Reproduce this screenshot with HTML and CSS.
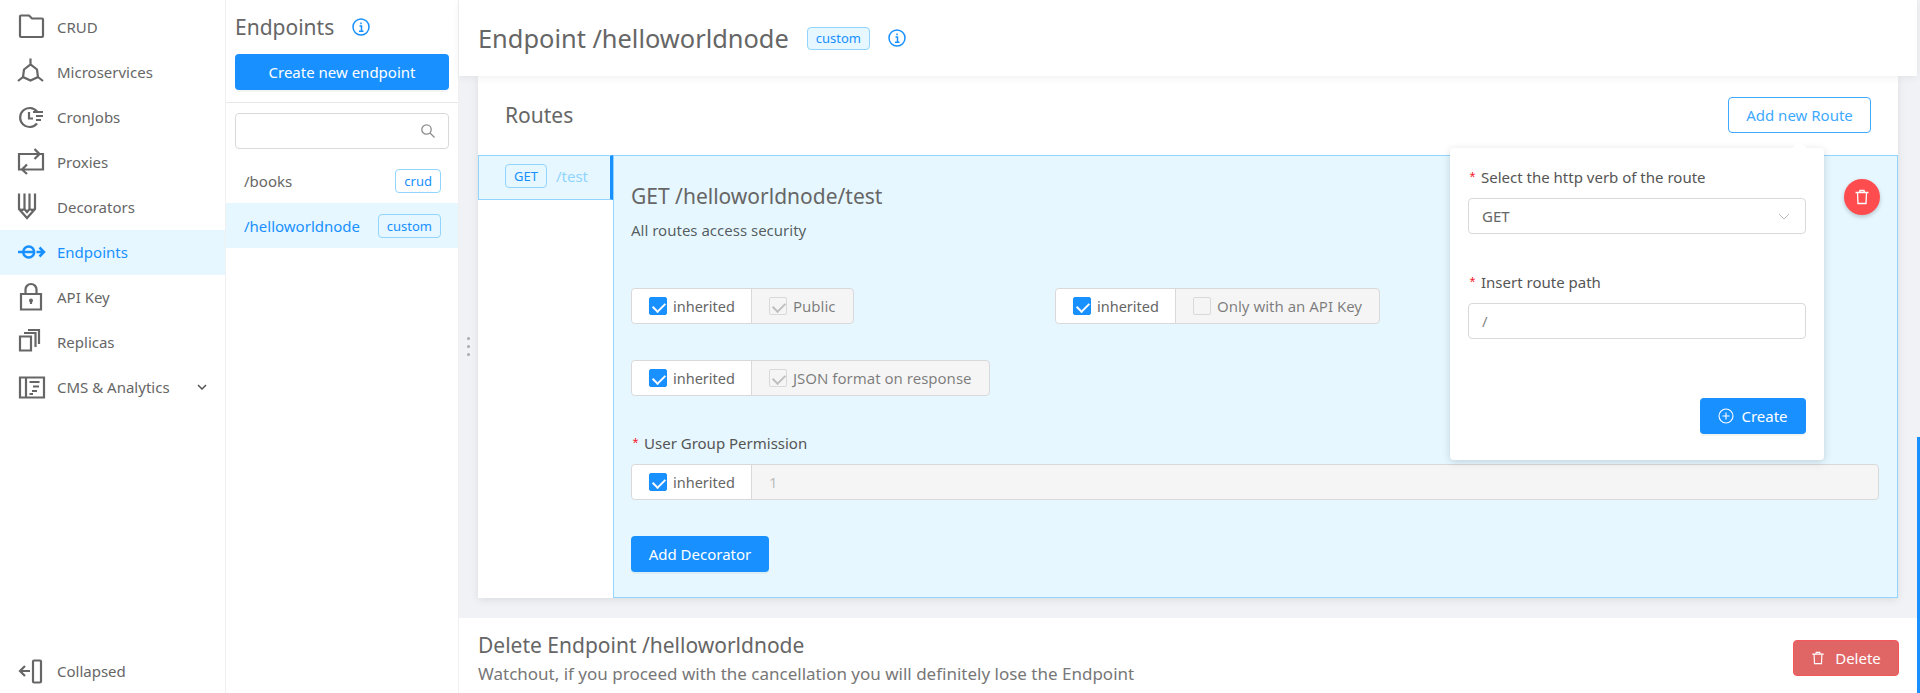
FILE: index.html
```html
<html>
<head>
<meta charset="UTF-8">
<title>Endpoint /helloworldnode</title>
<link rel="stylesheet" href="styles.css">
</head>
<body>
<div class="app">
    <!-- main menu -->
    <nav class="menu">
        <ul class="menu_list">
            <li class="menu_item">
                <svg class="menu_icon" viewBox="0 0 26 26"><path d="M2 1.500a1 1 0 0 1 1-1h8l3 3h10a1 1 0 0 1 1 1v16.500a1 1 0 0 1-1 1H3a1 1 0 0 1-1-1z"/></svg>
                <span>CRUD</span>
            </li>
            <li class="menu_item">
                <svg class="menu_icon" viewBox="0 0 26 26"><path d="M12.500-1.500v6M6 9.500l6.500-5 6.500 5 1 7.500-7.500 3.500L5 17zM5 17l-5 4M20 17l5 4"/></svg>
                <span>Microservices</span>
            </li>
            <li class="menu_item">
                <svg class="menu_icon" viewBox="0 0 26 26"><path d="M19 6.500A9.500 9.500 0 1 0 19 18.500M11 7v6.500h4M15 7h10M18 11h7M18 15h5"/></svg>
                <span>CronJobs</span>
            </li>
            <li class="menu_item">
                <svg class="menu_icon" viewBox="0 0 26 26"><path d="M7 19.500H1V4H21M16.500-1 21.500 4l-5 5M19 4h6v15.500H5M9 14.500l-5 5 5 4.500"/></svg>
                <span>Proxies</span>
            </li>
            <li class="menu_item">
                <svg class="menu_icon" viewBox="0 0 26 26"><path d="M1-1.500v15.500l8 9 8-9V-1.500M6.500-1.500V14l2.500 3 2.500-3V-1.500M1 14l3 1 2.500-1M17 14l-3 1-2.500-1"/></svg>
                <span>Decorators</span>
            </li>
            <li class="menu_item active">
                <svg class="menu_icon" viewBox="0 0 26 26"><circle class="thick" cx="10.700" cy="12" r="5.500"/><path class="thick" d="M0 12h15.500M18.500 12h6.500M21.500 7.500 26 12l-4.500 4.500"/></svg>
                <span>Endpoints</span>
            </li>
            <li class="menu_item">
                <svg class="menu_icon" viewBox="0 0 26 26"><path d="M3 9h20v15.500H3zM7.500 9V4.500a5.500 5.500 0 0 1 11 0V9M13 16v3"/><circle class="solid" cx="13" cy="15.500" r="2"/></svg>
                <span>API Key</span>
            </li>
            <li class="menu_item">
                <svg class="menu_icon" viewBox="0 0 26 26"><path d="M2 6.500h11v14H2zM6 3h11.500v14M10 0h11v14"/></svg>
                <span>Replicas</span>
            </li>
            <li class="menu_item">
                <svg class="menu_icon" viewBox="0 0 26 26"><path d="M2 2.500h24v20H2zM8 2.500v20M11.500 7h10M15 11.500h6M14 16h5M11.500 19h3.500"/></svg>
                <span>CMS &amp; Analytics</span>
                <svg class="menu_arrow" viewBox="0 0 10 6"><path d="M1 1l4 4 4-4"/></svg>
            </li>
        </ul>
        <div class="menu_item collapse_item">
            <svg class="menu_icon" viewBox="0 0 26 26"><path d="M2 12h10M7 7l-5 5 5 5M16 1.500h6a1 1 0 0 1 1 1v20a1 1 0 0 1-1 1h-6a1 1 0 0 1-1-1v-20a1 1 0 0 1 1-1z"/></svg>
            <span>Collapsed</span>
        </div>
    </nav>

    <!-- endpoints list -->
    <aside class="side">
        <div class="side_top">
            <h2 class="side_title">Endpoints
                <svg class="info_icon" viewBox="0 0 18 18"><circle cx="9" cy="9" r="8"/><path d="M7.500 8h2v5M7 13.200h4.500M9 4.500v1.800"/></svg>
            </h2>
            <button class="btn primary wide">Create new endpoint</button>
        </div>
        <div class="search_wrap">
            <div class="search">
                <svg class="search_icon" viewBox="0 0 14 14"><circle cx="5.500" cy="5.500" r="4.700"/><path d="M9 9l4.500 4.500"/></svg>
            </div>
        </div>
        <ul class="ep_list">
            <li class="ep_row"><span>/books</span><span class="tag">crud</span></li>
            <li class="ep_row selected"><span>/helloworldnode</span><span class="tag">custom</span></li>
        </ul>
    </aside>

    <main class="main">
        <div class="dots"><i></i><i></i><i></i></div>
        <header class="head">
            <h1 class="head_title">Endpoint /helloworldnode</h1>
            <span class="tag head_tag">custom</span>
            <svg class="info_icon" viewBox="0 0 18 18"><circle cx="9" cy="9" r="8"/><path d="M7.500 8h2v5M7 13.200h4.500M9 4.500v1.800"/></svg>
        </header>

        <section class="card">
            <div class="card_head">
                <h3 class="card_title">Routes</h3>
                <button class="btn outline">Add new Route</button>
            </div>
            <div class="routes">
                <div class="route_tabs">
                    <div class="route_tab"><span class="tag verb">GET</span><span class="route_path">/test</span></div>
                </div>
                <div class="route_body">
                    <h4 class="route_title">GET /helloworldnode/test</h4>
                    <p class="route_sub">All routes access security</p>

                    <div class="opts first">
                        <div class="group">
                            <div class="group_left"><span class="check on"></span>inherited</div>
                            <div class="group_right"><span class="check off_on"></span>Public</div>
                        </div>
                        <div class="group">
                            <div class="group_left"><span class="check on"></span>inherited</div>
                            <div class="group_right"><span class="check"></span>Only with an API Key</div>
                        </div>
                        <div class="group">
                            <div class="group_left"><span class="check on"></span>inherited</div>
                            <div class="group_right"><span class="check"></span>Only with a valid token</div>
                        </div>
                    </div>
                    <div class="opts">
                        <div class="group">
                            <div class="group_left"><span class="check on"></span>inherited</div>
                            <div class="group_right"><span class="check off_on"></span>JSON format on response</div>
                        </div>
                    </div>

                    <label class="label perm_label"><span class="req">*</span>User Group Permission</label>
                    <div class="group full">
                        <div class="group_left"><span class="check on"></span>inherited</div>
                        <div class="group_right num">1</div>
                    </div>

                    <button class="btn primary decorator">Add Decorator</button>

                    <button class="trash_btn">
                        <svg class="trash_icon" viewBox="0 0 16 16"><path d="M1.500 3.500h13M3.500 3.500 4 14.500h8l.500-11M5.500 3.500l.5-2h4l.5 2"/></svg>
                    </button>
                </div>
            </div>

            <div class="pop">
                <span class="pop_arrow"></span>
                <label class="label"><span class="req">*</span>Select the http verb of the route</label>
                <div class="field">GET
                    <svg class="select_arrow" viewBox="0 0 12 7"><path d="M1 1l5 5 5-5"/></svg>
                </div>
                <label class="label second"><span class="req">*</span>Insert route path</label>
                <div class="field path">/</div>
                <div class="pop_foot">
                    <button class="btn primary create">
                        <svg class="plus_icon" viewBox="0 0 16 16"><circle cx="8" cy="8" r="7"/><path d="M8 4.500v7M4.500 8h7"/></svg>
                        Create
                    </button>
                </div>
            </div>
        </section>

        <section class="danger">
            <div>
                <div class="danger_title">Delete Endpoint /helloworldnode</div>
                <div class="danger_sub">Watchout, if you proceed with the cancellation you will definitely lose the Endpoint</div>
            </div>
            <button class="btn delete">
                <svg class="trash_icon small" viewBox="0 0 16 16"><path d="M1.500 3.500h13M3.500 3.500 4 14.500h8l.500-11M5.500 3.500l.5-2h4l.5 2"/></svg>
                Delete
            </button>
        </section>
    </main>
    <div class="scroll"><div class="scroll_thumb"></div></div>
</div>
</body>
</html>
```
FILE: styles.css
```css
* {
    box-sizing: border-box;
}

html, body {
    margin: 0;
    height: 100%;
    overflow: hidden;
}

body {
    font-family: "Noto Sans", "Open Sans", sans-serif;
    font-size: 15px;
    color: rgba(0, 0, 0, 0.65);
    background: #f0f2f5;
}

h1, h2, h3, h4, p, ul {
    margin: 0;
    padding: 0;
    font-weight: 400;
    list-style: none;
}

.app {
    display: flex;
    height: 693px;
}

/* main menu */
.menu {
    width: 226px;
    flex: none;
    display: flex;
    flex-direction: column;
    justify-content: space-between;
    background: #fff;
    border-right: 1px solid #f0f0f0;
    padding: 5px 0 0;
}

.menu_item {
    height: 45px;
    display: flex;
    align-items: center;
    padding: 0 18px;
    gap: 6px;
    color: #666;
}

.menu_item span {
    padding-bottom: 2px;
}

.menu_item.active {
    background: #e6f7ff;
    color: #1890ff;
}

.menu_icon {
    width: 26px;
    height: 26px;
    flex: none;
    fill: none;
    stroke: #666;
    stroke-width: 2.200;
    margin-right: 7px;
    overflow: visible;
}

.active .menu_icon {
    stroke: #1890ff;
}

.menu_icon .thick {
    stroke-width: 2.500;
}

.menu_icon .solid {
    fill: #666;
    stroke: none;
}

.menu_arrow {
    width: 10px;
    height: 6px;
    margin-left: auto;
    fill: none;
    stroke: #555;
    stroke-width: 1.500;
    position: relative;
    top: -1px;
}

.collapse_item {
    margin-bottom: -1px;
}

/* endpoints column */
.side {
    width: 233px;
    flex: none;
    background: #fff;
    border-right: 1px solid #f0f0f0;
}

.side_top {
    height: 103px;
    padding: 12px 9px 0;
    border-bottom: 1px solid #e8e8e8;
}

.side_title {
    font-size: 21px;
    line-height: 30px;
    color: #666;
    display: flex;
    align-items: center;
    gap: 18px;
    margin-bottom: 12px;
}

.info_icon {
    width: 18px;
    height: 18px;
    fill: none;
    stroke: #1890ff;
    stroke-width: 1.500;
}

.search_wrap {
    padding: 10px 9px 9px;
}

.search {
    height: 36px;
    border: 1px solid #d9d9d9;
    border-radius: 4px;
    display: flex;
    align-items: center;
    justify-content: flex-end;
    padding-right: 13px;
}

.search_icon {
    width: 14px;
    height: 14px;
    fill: none;
    stroke: #8c8c8c;
    stroke-width: 1.300;
}

.ep_row {
    height: 45px;
    display: flex;
    align-items: center;
    justify-content: space-between;
    padding: 0 17px 0 18px;
    color: #666;
}

.ep_row.selected {
    background: #e6f7ff;
    color: #1890ff;
}

.tag {
    display: inline-flex;
    align-items: center;
    height: 24px;
    padding: 0 8px;
    font-size: 13px;
    color: #1890ff;
    background: #fff;
    border: 1px solid #91d5ff;
    border-radius: 4px;
}

.selected .tag, .head_tag, .verb {
    background: #e6f7ff;
}

/* main area */
.main {
    flex: 1;
    min-width: 0;
    position: relative;
    display: flex;
    flex-direction: column;
}

.dots {
    position: absolute;
    left: 8px;
    top: 337px;
    display: flex;
    flex-direction: column;
    gap: 5px;
}

.dots i {
    width: 3px;
    height: 3px;
    border-radius: 50%;
    background: #aaa;
}

.head {
    height: 76px;
    flex: none;
    background: #fff;
    box-shadow: 0 2px 8px rgba(0, 0, 0, 0.06);
    display: flex;
    align-items: center;
    padding-left: 19px;
    position: relative;
    z-index: 2;
}

.head_title {
    font-size: 25.400px;
    color: #666;
    margin-right: 18px;
}

.head_tag {
    margin-right: 18px;
    height: 23px;
}

.card {
    margin: 0 19px 20px;
    background: #fff;
    height: 522px;
    flex: none;
    position: relative;
    box-shadow: 0 2px 8px rgba(0, 0, 0, 0.09);
    display: flex;
    flex-direction: column;
}

.card_head {
    height: 79px;
    flex: none;
    display: flex;
    align-items: center;
    justify-content: space-between;
    padding: 0 27px 1px 27px;
}

.card_title {
    font-size: 21px;
    color: #666;
}

.btn {
    font: inherit;
    height: 36px;
    border-radius: 4px;
    border: 1px solid transparent;
    padding: 0 17px;
    display: inline-flex;
    align-items: center;
    justify-content: center;
}

.primary {
    background: #1890ff;
    color: #fff;
    box-shadow: 0 2px 0 rgba(0, 0, 0, 0.045);
}

.wide {
    width: 100%;
}

.outline {
    width: 143px;
    padding: 0;
    background: #fff;
    color: #40a9ff;
    border-color: #40a9ff;
}

.routes {
    flex: 1;
    display: flex;
    min-height: 0;
}

.route_tabs {
    width: 135px;
    flex: none;
}

.route_tab {
    height: 45px;
    background: #e6f7ff;
    border: 1px solid #91d5ff;
    border-right: 3px solid #1890ff;
    padding-left: 26px;
    display: flex;
    align-items: center;
    gap: 9px;
}

.verb {
    margin-top: -3px;
}

.route_path {
    color: #91d5ff;
    margin-top: -4px;
}

.route_body {
    flex: 1;
    min-width: 0;
    background: #e6f7ff;
    border: 1px solid #91d5ff;
    padding: 25px 0 0 17px;
    position: relative;
}

.route_title {
    font-size: 21px;
    line-height: 30px;
    color: #666;
}

.route_sub {
    margin-top: 8px;
    line-height: 22px;
}

.opts {
    display: grid;
    grid-template-columns: 424px 424px 346px;
    justify-items: start;
    margin-bottom: 36px;
}

.opts.first {
    margin-top: 47px;
}

.group {
    height: 36px;
    display: inline-flex;
    border: 1px solid #d9d9d9;
    border-radius: 4px;
    background: #f5f5f5;
    color: rgba(0, 0, 0, 0.5);
}

.group_left {
    width: 120px;
    flex: none;
    background: #fff;
    border-right: 1px solid #d9d9d9;
    border-radius: 4px 0 0 4px;
    display: flex;
    align-items: center;
    padding-left: 17px;
    gap: 6px;
    font-size: 14.500px;
    color: #666;
}

.group_right {
    display: flex;
    align-items: center;
    padding: 0 17px;
    gap: 6px;
    white-space: nowrap;
}

.check {
    width: 18px;
    height: 18px;
    border: 1px solid #d9d9d9;
    border-radius: 2px;
    position: relative;
    flex: none;
}

.check.on {
    background: #1890ff;
    border-color: #1890ff;
}

.check.on::after, .check.off_on::after {
    content: "";
    position: absolute;
    left: 5px;
    top: 2px;
    width: 6px;
    height: 10px;
    border: solid #fff;
    border-width: 0 2px 2px 0;
    transform: rotate(45deg);
}

.check.off_on::after {
    border-color: #bfbfbf;
}

.label {
    display: block;
    line-height: 22px;
    color: #555;
}

.req {
    color: #f5222d;
    margin-right: 4px;
    font-family: "Liberation Mono", monospace;
}

.perm_label {
    margin-top: 1px;
    margin-bottom: 7px;
}

.group.full {
    display: flex;
    width: 1248px;
}

.num {
    color: #bfbfbf;
}

.decorator {
    margin-top: 36px;
    width: 138px;
    padding: 0;
}

.trash_btn {
    position: absolute;
    left: 1230px;
    top: 23px;
    width: 36px;
    height: 36px;
    border-radius: 50%;
    border: none;
    background: #ff4d4f;
    box-shadow: 0 2px 4px rgba(0, 0, 0, 0.2);
    display: flex;
    align-items: center;
    justify-content: center;
    padding: 0;
}

.trash_icon {
    width: 16px;
    height: 16px;
    fill: none;
    stroke: #fff;
    stroke-width: 1.300;
}

/* popover */
.pop {
    position: absolute;
    left: 972px;
    top: 72px;
    width: 374px;
    height: 312px;
    background: #fff;
    border-radius: 4px;
    box-shadow: 0 2px 8px rgba(0, 0, 0, 0.15);
    padding: 18px 18px 0;
    z-index: 3;
    display: flex;
    flex-direction: column;
}

.pop_arrow {
    position: absolute;
    top: -5px;
    right: 19px;
    width: 11px;
    height: 11px;
    background: #fff;
    transform: rotate(45deg);
}

.pop .label {
    margin-bottom: 7px;
}

.pop .second {
    margin-top: 37px;
    margin-bottom: 7px;
}

.field {
    height: 36px;
    flex: none;
    border: 1px solid #d9d9d9;
    border-radius: 4px;
    background: #fff;
    display: flex;
    align-items: center;
    justify-content: space-between;
    padding: 0 15px 0 13px;
    color: #666;
}

.path {
    color: #888;
}

.select_arrow {
    width: 12px;
    height: 7px;
    fill: none;
    stroke: #bfbfbf;
    stroke-width: 1;
}

.pop_foot {
    display: flex;
    justify-content: flex-end;
    margin-top: 59px;
}

.create {
    width: 106px;
    gap: 7px;
    padding: 0;
}

.plus_icon {
    width: 16px;
    height: 16px;
    fill: none;
    stroke: #fff;
    stroke-width: 1.100;
}

/* delete section */
.danger {
    flex: 1;
    background: #fff;
    display: flex;
    justify-content: space-between;
    padding: 12px 18px 0 19px;
}

.danger_title {
    font-size: 21px;
    line-height: 30px;
    color: #666;
}

.danger_sub {
    font-size: 17px;
    line-height: 24px;
    margin-top: 2px;
    color: #777;
    white-space: nowrap;
}

.delete {
    margin-top: 10px;
    width: 106px;
    gap: 10px;
    padding: 0;
    color: #fff;
    background: #e06666;
    border-color: #f4575a;
}

.small {
    width: 14px;
    height: 14px;
}

.scroll {
    width: 3px;
    flex: none;
    position: relative;
}

.scroll_thumb {
    position: absolute;
    left: 0;
    right: 0;
    top: 437px;
    bottom: 0;
    background: #1890ff;
}
```
